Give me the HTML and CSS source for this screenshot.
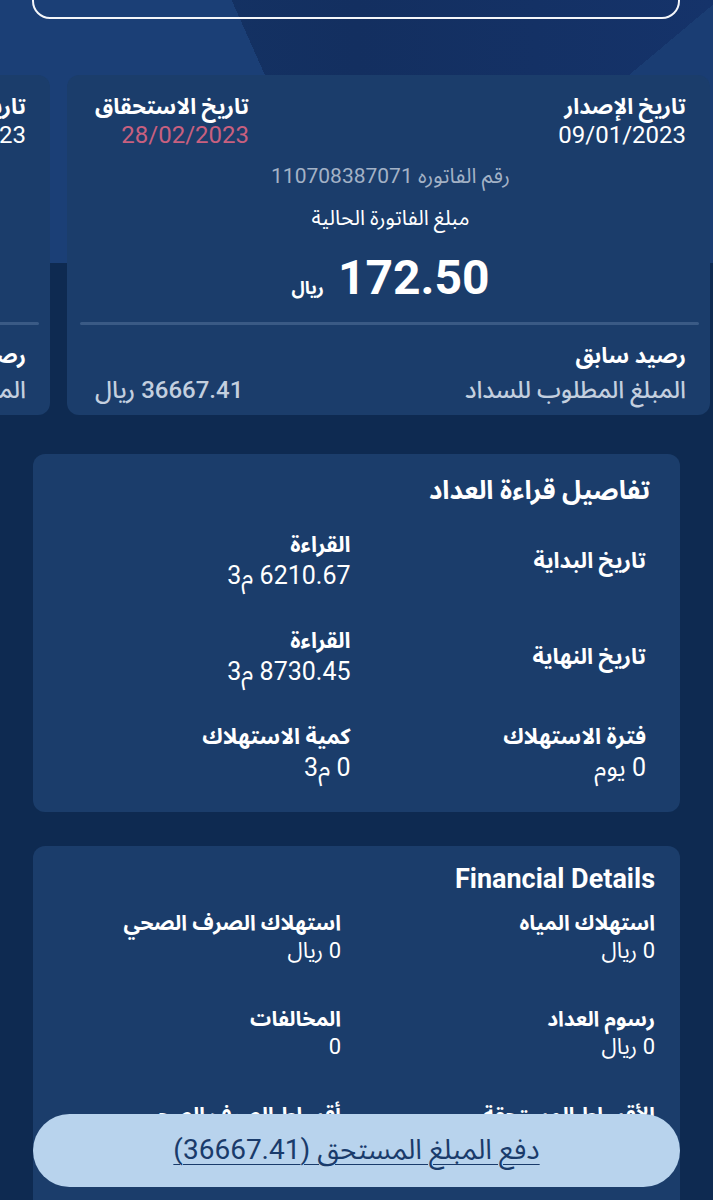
FILE: index.html
```html
<!DOCTYPE html>
<html lang="ar" dir="rtl">
<head>
<meta charset="utf-8">
<title>Invoice</title>
<link rel="stylesheet" href="styles.css">
</head>
<body>
<div class="page">
  <div class="top-card"></div>

  <div class="carousel">
    <div class="bill-card">
      <div class="dates">
        <div class="date-item">
          <div class="d-label">تاريخ الإصدار</div>
          <div class="d-value">09/01/2023</div>
        </div>
        <div class="date-item">
          <div class="d-label">تاريخ الاستحقاق</div>
          <div class="d-value due">28/02/2023</div>
        </div>
      </div>
      <div class="invoice-no">رقم الفاتوره 110708387071</div>
      <div class="amount-label">مبلغ الفاتورة الحالية</div>
      <div class="amount"><span class="amount-num">172.50</span><span class="amount-cur">ريال</span></div>
      <div class="divider"></div>
      <div class="prev-label">رصيد سابق</div>
      <div class="prev-row">
        <span>المبلغ المطلوب للسداد</span>
        <span>36667.41 ريال</span>
      </div>
    </div>
    <div class="bill-card">
      <div class="dates">
        <div class="date-item">
          <div class="d-label">تاريخ الإصدار</div>
          <div class="d-value">09/12/2023</div>
        </div>
        <div class="date-item">
          <div class="d-label">تاريخ الاستحقاق</div>
          <div class="d-value due">28/01/2023</div>
        </div>
      </div>
      <div class="invoice-no">رقم الفاتوره 110708387070</div>
      <div class="amount-label">مبلغ الفاتورة الحالية</div>
      <div class="amount"><span class="amount-num">165.20</span><span class="amount-cur">ريال</span></div>
      <div class="divider"></div>
      <div class="prev-label">رصيد سابق</div>
      <div class="prev-row">
        <span>المبلغ المطلوب للسداد</span>
        <span>36494.91 ريال</span>
      </div>
    </div>
  </div>

  <section class="panel meter">
    <h2 class="panel-title">تفاصيل قراءة العداد</h2>
    <div class="grid meter-grid">
      <div class="cell center"><div class="c-label">تاريخ البداية</div></div>
      <div class="cell"><div class="c-label">القراءة</div><div class="c-value">6210.67 م3</div></div>
      <div class="cell center"><div class="c-label">تاريخ النهاية</div></div>
      <div class="cell"><div class="c-label">القراءة</div><div class="c-value">8730.45 م3</div></div>
      <div class="cell"><div class="c-label">فترة الاستهلاك</div><div class="c-value">0 يوم</div></div>
      <div class="cell"><div class="c-label">كمية الاستهلاك</div><div class="c-value">0 م3</div></div>
    </div>
  </section>

  <section class="panel fin">
    <h2 class="panel-title fin-title" dir="ltr">Financial Details</h2>
    <div class="grid fin-grid">
      <div class="cell"><div class="c-label">استهلاك المياه</div><div class="c-value">0 ريال</div></div>
      <div class="cell"><div class="c-label">استهلاك الصرف الصحي</div><div class="c-value">0 ريال</div></div>
      <div class="cell"><div class="c-label">رسوم العداد</div><div class="c-value">0 ريال</div></div>
      <div class="cell"><div class="c-label">المخالفات</div><div class="c-value">0</div></div>
      <div class="cell"><div class="c-label">الأقساط المستحقة</div><div class="c-value">0 ريال</div></div>
      <div class="cell"><div class="c-label">أقساط الصرف الصحي</div><div class="c-value">0 ريال</div></div>
      <div class="cell"><div class="c-label">ضريبة القيمة المضافة</div><div class="c-value">0 ريال</div></div>
      <div class="cell"><div class="c-label">الإجمالي</div><div class="c-value">172.50 ريال</div></div>
    </div>
  </section>

  <button class="pay"><span class="pay-text">دفع المبلغ المستحق (36667.41)</span></button>
</div>
</body>
</html>
```

FILE: styles.css
```css
* { box-sizing: border-box; }
html, body { margin: 0; padding: 0; }
body {
  font-family: Roboto, "Noto Sans Arabic", "DejaVu Sans", sans-serif;
  color: #ffffff;
  background-color: #0e2a51;
  background-image:
    linear-gradient(66deg, #1b3f76 0 42%, rgba(0,0,0,0) 42%),
    linear-gradient(140deg, rgba(0,0,0,0) 70%, #1a3d73 70%),
    linear-gradient(90deg, #153567 0%, #132f60 50%, #15336a 100%);
  background-size: 100% 263px, 100% 263px, 100% 263px;
  background-repeat: no-repeat;
  min-height: 1200px;
}
.page { padding-bottom: 120px; }

.top-card {
  height: 60px;
  margin: -41px 33px 0 32px;
  border: 2px solid #f4f6fa;
  border-radius: 18px;
}

.carousel {
  margin-top: 56px;
  display: flex;
  gap: 17px;
  padding-right: 3px;
  overflow: hidden;
}
.bill-card {
  flex: 0 0 643px;
  background: #1b3d6b;
  border-radius: 12px;
  padding: 18px 24px 10px 28px;
}
.dates {
  display: flex;
  justify-content: space-between;
}
.d-label {
  font-size: 22px;
  font-weight: 700;
  line-height: 28px;
}
.d-value {
  font-size: 24px;
  line-height: 28px;
}
.d-value.due { color: #c8607f; }
.invoice-no {
  margin-top: 14px;
  text-align: center;
  font-size: 21px;
  line-height: 26px;
  color: #a3b2c6;
}
.amount-label {
  margin-top: 16px;
  text-align: center;
  font-size: 21px;
  line-height: 26px;
}
.amount {
  margin-top: 19px;
  display: flex;
  justify-content: center;
  align-items: baseline;
  gap: 14px;
  line-height: 56px;
}
.amount-num {
  font-size: 48px;
  font-weight: 700;
}
.amount-cur {
  font-size: 18px;
  font-weight: 700;
}
.divider {
  margin: 6px -13px 0 -15px;
  height: 3px;
  background: #3a5a85;
  border-radius: 2px;
}
.prev-label {
  margin-top: 16px;
  font-size: 22px;
  font-weight: 700;
  line-height: 30px;
}
.prev-row {
  margin-top: 4px;
  display: flex;
  justify-content: space-between;
  font-size: 24px;
  font-weight: 500;
  line-height: 30px;
  color: #c3cfdf;
}

.panel {
  margin: 39px 33px 0;
  background: #1b3d6b;
  border-radius: 12px;
}
.panel-title {
  margin: 0;
  font-size: 26px;
  font-weight: 700;
  line-height: 32px;
}
.meter { padding: 20px 30px 29px 30px; }
.meter-grid {
  padding-right: 4px;
  margin-top: 23px;
  row-gap: 34px;
  column-gap: 8px;
}
.grid {
  display: grid;
  grid-template-columns: 1fr 1fr;
}
.cell {
  display: flex;
  flex-direction: column;
}
.cell.center { justify-content: center; }
.c-label {
  font-size: 22px;
  font-weight: 700;
  line-height: 31px;
}
.c-value {
  font-size: 25px;
  line-height: 31px;
}

.fin {
  margin-top: 34px;
  padding: 17px 25px 40px 30px;
}
.fin-title {
  text-align: right;
  font-size: 27px;
  font-weight: 700;
}
.fin-grid {
  margin-top: 14px;
  row-gap: 40px;
  column-gap: 36px;
}
.fin-grid .c-label { font-size: 21px; line-height: 28px; }
.fin-grid .c-value { font-size: 22px; line-height: 28px; }

.pay {
  position: fixed;
  left: 33px;
  right: 33px;
  bottom: 13px;
  height: 73px;
  border: none;
  border-radius: 37px;
  background: #b8d3ed;
  color: #1a3b6b;
  font-family: Roboto, "Noto Sans Arabic", "DejaVu Sans", sans-serif;
  font-size: 28px;
  cursor: pointer;
}
.pay-text { text-decoration: underline; text-decoration-thickness: 1px; text-underline-offset: 5px; }
```
